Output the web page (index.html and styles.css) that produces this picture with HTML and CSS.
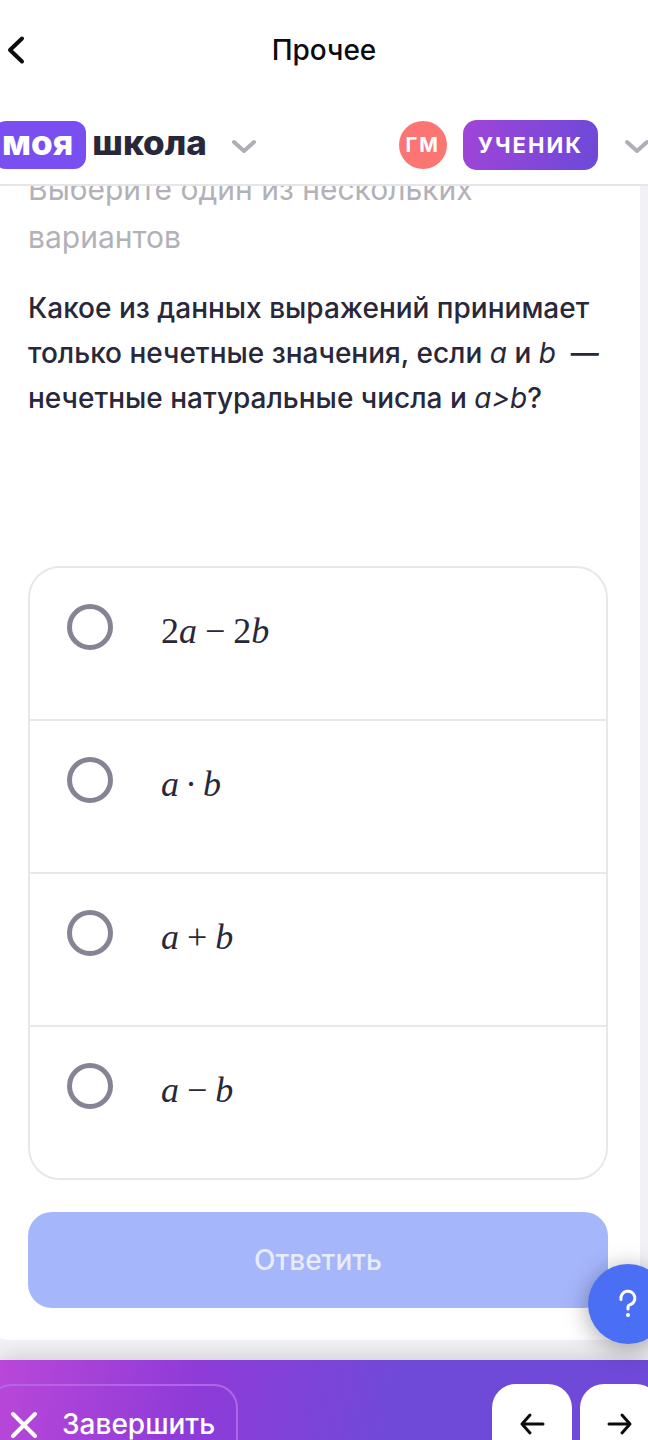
FILE: index.html
```html
<!DOCTYPE html>
<html lang="ru">
    <head>
        <meta charset="UTF-8">
        <meta name="viewport" content="width=device-width, initial-scale=1.0">
        <title>Прочее</title>
        <link rel="stylesheet" href="styles.css">
    </head>
    <body>
        <div class="topbar">
            <button type="button" class="back" aria-label="Назад">
                <svg width="32" height="32" viewBox="0 0 32 32"><path d="M22 4.500L10 16L22 27.500"/></svg>
            </button>
            <h1 class="title">Прочее</h1>
        </div>

        <header class="header">
            <a href="#" class="logo"><span class="logo-box">моя</span><span class="logo-text">школа</span></a>
            <button type="button" class="arrow" aria-label="Меню">
                <svg width="26" height="16" viewBox="0 0 26 16"><path d="M3 5L13 14L23 5"/></svg>
            </button>
            <span class="avatar">ГМ</span>
            <button type="button" class="role">УЧЕНИК</button>
            <button type="button" class="arrow" aria-label="Профиль">
                <svg width="26" height="16" viewBox="0 0 26 16"><path d="M3 5L13 14L23 5"/></svg>
            </button>
        </header>

        <main class="main">
            <form class="card">
                <p class="hint">Выберите один из нескольких вариантов</p>
                <p class="question">Какое из данных выражений принимает только нечетные значения, если <i>a</i> и <i>b</i>&nbsp; — нечетные натуральные числа и <i>a&gt;b</i>?</p>
                <ul class="list">
                    <li><label class="list-item">
                        <input type="radio" name="answer" class="radio">
                        <span class="formula">2<i>a</i><span class="sign">−</span>2<i>b</i></span>
                    </label></li>
                    <li><label class="list-item">
                        <input type="radio" name="answer" class="radio">
                        <span class="formula"><i>a</i><span class="sign dot">·</span><i>b</i></span>
                    </label></li>
                    <li><label class="list-item">
                        <input type="radio" name="answer" class="radio">
                        <span class="formula"><i>a</i><span class="sign">+</span><i>b</i></span>
                    </label></li>
                    <li><label class="list-item">
                        <input type="radio" name="answer" class="radio">
                        <span class="formula"><i>a</i><span class="sign">−</span><i>b</i></span>
                    </label></li>
                </ul>
                <button type="submit" class="submit" disabled>Ответить</button>
            </form>
        </main>

        <footer class="footer">
            <button type="button" class="finish">
                <svg width="28" height="28" viewBox="0 0 28 28"><path d="M3 4L25 26M25 4L3 26"/></svg>
                Завершить
            </button>
            <div class="nav">
                <button type="button" class="nav-btn" aria-label="Предыдущее задание">
                    <svg width="28" height="28" viewBox="0 0 28 28"><path d="M25 14H4M12 5L4 14L12 23"/></svg>
                </button>
                <button type="button" class="nav-btn" aria-label="Следующее задание">
                    <svg width="28" height="28" viewBox="0 0 28 28"><path d="M3 14H24M16 5L24 14L16 23"/></svg>
                </button>
            </div>
        </footer>

        <button type="button" class="help" aria-label="Помощь">
            <svg width="24" height="32" viewBox="0 0 24 32"><path d="M5 11.500A7 7 0 1 1 13.500 17Q12 17.500 12 19V21"/><circle cx="12" cy="27" r="2"/></svg>
        </button>
    </body>
</html>
```
FILE: styles.css
```css
*{
    box-sizing: border-box;
}

body{
    display: flex;
    flex-direction: column;
    height: 100vh;
    margin: 0;
    overflow: hidden;
    background-color: #f2f1f6;
    color: #29283a;
    font-family: Inter, "Liberation Sans", sans-serif;
    font-size: 28px;
}

h1, p, ul{
    margin: 0;
    padding: 0;
}

ul{
    list-style: none;
}

a{
    text-decoration: none;
}

button{
    padding: 0;
    border: none;
    background: none;
    color: inherit;
    font-family: inherit;
    font-size: inherit;
    cursor: pointer;
}

svg{
    display: block;
    flex-shrink: 0;
    fill: none;
    stroke: currentColor;
    stroke-width: 3;
    stroke-linecap: round;
    stroke-linejoin: round;
}

/* верхняя панель */
.topbar{
    display: grid;
    grid-template-columns: 48px 1fr 48px;
    align-items: center;
    flex-shrink: 0;
    height: 100px;
    background-color: #fff;
    color: #0c0c10;
}

.title{
    font-size: 28px;
    font-weight: 500;
    text-align: center;
}

/* шапка */
.header{
    display: flex;
    align-items: center;
    flex-shrink: 0;
    gap: 16px;
    height: 86px;
    padding-top: 6px;
    overflow: hidden;
    border-bottom: 2px solid #e6e6ea;
    background-color: #fff;
}

.logo{
    display: flex;
    align-items: center;
    gap: 6px;
    margin-left: -6px;
    color: #29283a;
    font-size: 35px;
    font-weight: 800;
    line-height: 42px;
}

.logo-box{
    height: 48px;
    padding: 0 13px 0 8px;
    border-radius: 12px;
    background-color: #7a4ff2;
    color: #fff;
}

.logo-text{
    height: 48px;
}

.arrow{
    flex-shrink: 0;
    margin-left: 8px;
    color: #aeaeb6;
}

.back svg,
.arrow svg{
    stroke-width: 4;
}

.avatar{
    width: 48px;
    height: 48px;
    margin-left: auto;
    border-radius: 50%;
    background-color: #fb7672;
    color: #fff;
    font-size: 20px;
    font-weight: 700;
    letter-spacing: 2px;
    line-height: 48px;
    text-align: center;
}

.role{
    height: 50px;
    padding: 0 15px;
    border-radius: 14px;
    background: linear-gradient(100deg, #a044d8, #6c4ad8);
    color: #fff;
    font-size: 22px;
    font-weight: 700;
    letter-spacing: 2px;
}

.role + .arrow{
    margin: 0 -2px 0 10px;
}

/* задание: список прокручен вниз */
.main{
    display: flex;
    flex-direction: column;
    justify-content: flex-end;
    flex: 1;
    min-height: 0;
    padding-bottom: 20px;
    overflow: hidden;
}

.card{
    flex-shrink: 0;
    margin: 0 8px 0 -8px;
    padding: 32px 32px 32px 36px;
    border-radius: 16px;
    background-color: #fff;
}

.hint{
    margin-bottom: 25px;
    color: #b2b1b8;
    font-size: 30px;
    line-height: 48px;
}

.question{
    margin-bottom: 145px;
    font-weight: 450;
    line-height: 45px;
}

.list{
    margin-bottom: 32px;
    border: 2px solid #e8e8ea;
    border-radius: 32px;
}

.list li + li{
    border-top: 2px solid #e8e8ea;
}

.list-item{
    display: flex;
    align-items: flex-start;
    gap: 48px;
    height: 151px;
    padding: 36px 37px;
}

.radio{
    appearance: none;
    width: 46px;
    height: 46px;
    margin: 0;
    border: 5px solid #858494;
    border-radius: 50%;
}

.radio:checked{
    border-width: 14px;
    border-color: #4a6cf5;
}

.formula{
    font-family: "Liberation Serif", serif;
    font-size: 36px;
    line-height: 54px;
}

.sign{
    margin: 0 8px;
}

.dot{
    margin: 0 6px;
}

.submit{
    display: block;
    width: 100%;
    height: 96px;
    border-radius: 24px;
    background-color: #a6b6fb;
    color: #e8ecfd;
    font-weight: 500;
}

/* нижняя панель */
.footer{
    display: flex;
    justify-content: space-between;
    flex-shrink: 0;
    height: 80px;
    padding-top: 24px;
    background: linear-gradient(100deg, #b947d8, #8f3bd8 30%, #6f4ad8 62%);
    box-shadow: 0 0 24px rgba(0, 0, 0, .2);
    color: #fff;
}

.finish{
    display: flex;
    align-items: center;
    gap: 24px;
    height: 80px;
    margin-left: -12px;
    padding: 0 21px 0 20px;
    border: 2px solid #b166e4;
    border-radius: 24px;
    font-weight: 500;
}

.finish svg{
    stroke-width: 4;
}

.nav{
    display: flex;
    gap: 8px;
    margin-right: -12px;
}

.nav-btn{
    display: flex;
    align-items: center;
    justify-content: center;
    width: 80px;
    height: 80px;
    border-radius: 24px;
    background-color: #fff;
    color: #0c0c10;
}

/* кнопка помощи поверх страницы */
.help{
    display: flex;
    align-items: center;
    justify-content: center;
    position: fixed;
    right: -20px;
    bottom: 96px;
    width: 80px;
    height: 80px;
    border-radius: 50%;
    background-color: #4a6ff5;
    box-shadow: 0 4px 24px rgba(0, 0, 0, .35);
    color: #fff;
}

.help circle{
    fill: currentColor;
    stroke: none;
}
```
